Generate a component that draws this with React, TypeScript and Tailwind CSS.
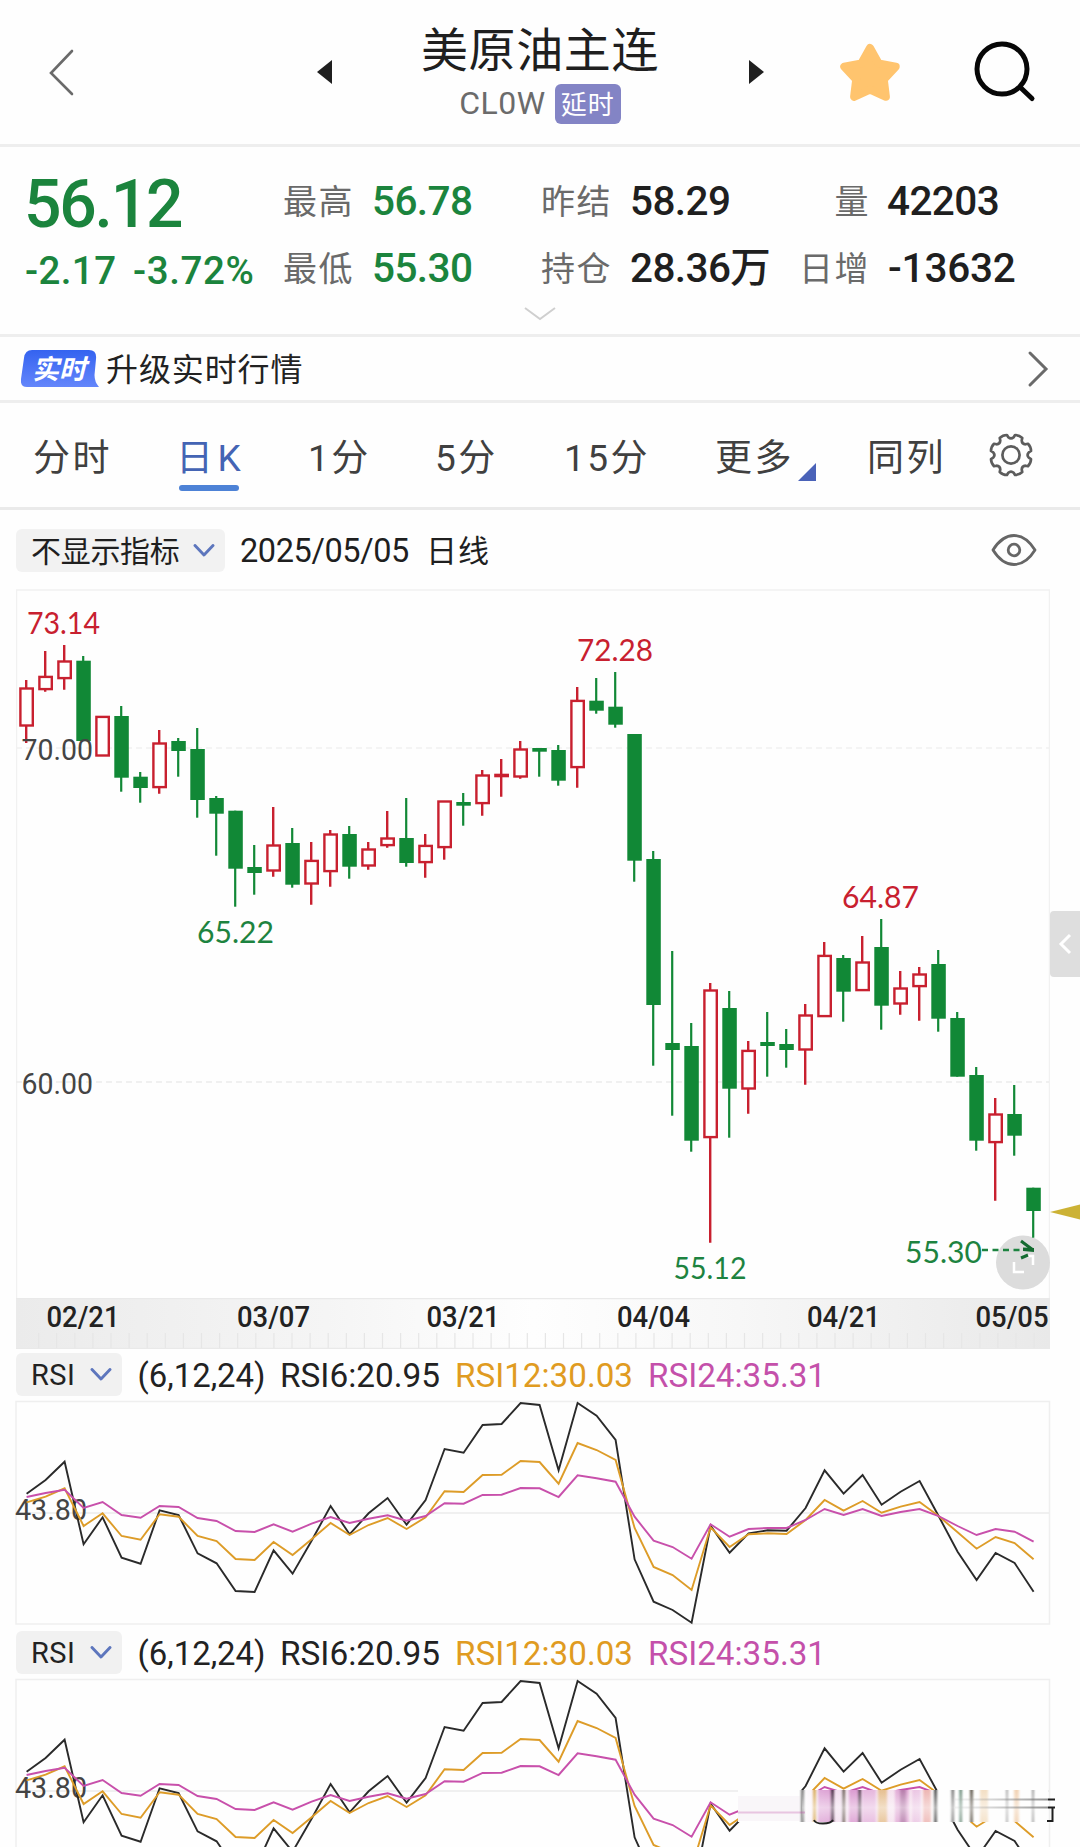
import React from "react";

const SANS = "font-['Roboto','Noto_Sans_CJK_SC',sans-serif]";
const FONT = "Roboto, 'Noto Sans CJK SC', sans-serif";
const LABEL_FONT = "Lato, 'Open Sans', sans-serif";
const RED = "#c8202f";
const GREEN = "#118836";
const STEP = 19;
const FIRST_X = 26.2;

// [direction, high, low, bodyTop, bodyBottom]
type Candle = ["r" | "g", number, number, number, number];

const candles: Candle[] = [
  ["r", 680, 743, 688.3, 725.7],
  ["r", 651, 691.7, 676.7, 689.3],
  ["r", 645, 689.7, 661.3, 678.3],
  ["g", 656, 741, 660.7, 741],
  ["r", 716.7, 755.7, 716.7, 755.7],
  ["g", 706, 791.7, 716, 777.7],
  ["g", 772, 802.7, 776.7, 788],
  ["r", 730, 793.7, 743.3, 787.3],
  ["g", 738, 776.7, 741, 751],
  ["g", 728, 817.7, 749, 800],
  ["g", 796, 855.7, 798, 813.7],
  ["g", 810.7, 906.7, 810.7, 868.7],
  ["g", 845, 894.7, 867, 873],
  ["r", 807, 876.7, 845.3, 870.7],
  ["g", 828, 887.7, 843, 884.7],
  ["r", 842, 904.7, 860.7, 883.7],
  ["r", 830, 886.7, 834.3, 871.3],
  ["g", 826, 878.7, 834, 866.7],
  ["r", 842, 869.7, 849.3, 865.7],
  ["r", 811, 847.7, 838.3, 845.3],
  ["g", 798, 866.7, 838, 863],
  ["r", 834, 877.7, 845.7, 862.3],
  ["r", 801.3, 859.7, 801.3, 847.3],
  ["g", 793, 825.7, 802, 805.7],
  ["r", 770, 815.7, 775.3, 803.3],
  ["r", 759, 796.7, 774.7, 776.3],
  ["r", 741, 778.7, 749.3, 776.7],
  ["g", 748, 776.7, 748, 751.7],
  ["g", 745, 785.7, 750, 780.7],
  ["r", 687, 787.7, 700.7, 767.3],
  ["g", 678, 713.7, 700.7, 710.7],
  ["g", 672, 727.7, 706.7, 724.7],
  ["g", 734, 881.7, 734, 860.7],
  ["g", 851, 1065.7, 859, 1005],
  ["g", 951, 1115.7, 1043, 1050],
  ["g", 1023, 1151.7, 1046, 1140.7],
  ["r", 983, 1242.7, 990.3, 1137.3],
  ["g", 991, 1137.7, 1008, 1088.7],
  ["r", 1041, 1113.7, 1050.7, 1088.7],
  ["g", 1012, 1076.7, 1042, 1046],
  ["g", 1029, 1067.7, 1044, 1050],
  ["r", 1004, 1084.7, 1015.3, 1049.7],
  ["r", 942, 1016.7, 955.7, 1016.3],
  ["g", 955, 1021.7, 958, 991.7],
  ["r", 936, 990.7, 962.3, 990.3],
  ["g", 919, 1029.7, 947, 1005.7],
  ["r", 971, 1014.7, 988.3, 1003.7],
  ["r", 967, 1020.7, 974.3, 986.3],
  ["g", 950, 1031.7, 964, 1018.7],
  ["g", 1012, 1076.7, 1018, 1076.7],
  ["g", 1067, 1150.7, 1075, 1140.7],
  ["r", 1098, 1200.7, 1114.3, 1142.3],
  ["g", 1085, 1155.7, 1114, 1135.7],
  ["g", 1187.7, 1237.7, 1187.7, 1223 - 12],
];

// RSI samples in thirds of a pixel below the header of their panel
const rsi6 = [641, 600, 545, 793, 712, 833, 851, 691, 705, 820, 850, 933, 936, 811, 881, 782, 678, 763, 700, 654, 734, 660, 507, 518, 435, 432, 369, 375, 571, 369, 407, 480, 838, 965, 990, 1028, 737, 818, 760, 751, 752, 684, 571, 641, 585, 674, 635, 603, 708, 815, 900, 819, 849, 935];
const rsi12 = [667, 650, 625, 738, 700, 768, 779, 703, 710, 768, 783, 837, 840, 786, 825, 778, 729, 765, 735, 714, 747, 712, 634, 636, 585, 584, 543, 546, 611, 489, 510, 540, 744, 861, 885, 930, 742, 801, 763, 760, 762, 720, 660, 692, 663, 698, 680, 666, 708, 757, 806, 771, 789, 838];
const rsi24 = [651, 639, 629, 684, 666, 705, 713, 678, 681, 714, 723, 753, 756, 733, 755, 731, 711, 729, 716, 706, 722, 708, 670, 671, 645, 644, 624, 625, 651, 586, 595, 605, 710, 782, 801, 836, 733, 770, 747, 744, 744, 720, 687, 705, 687, 708, 696, 687, 708, 738, 765, 747, 755, 785];

const toPoints = (values: number[]) =>
  values.map((v, i) => `${(FIRST_X + 0.4 + i * STEP).toFixed(1)},${(1280 + v / 3).toFixed(1)}`).join(" ");

type FitProps = { x: number; y: number; w: number; size: number; fill: string; children: string; family?: string; weight?: number };
function Fit({ x, y, w, size, fill, children, family = FONT, weight = 400 }: FitProps) {
  return (
    <text x={x} y={y} fontSize={size} fill={fill} fontFamily={family} fontWeight={weight} textLength={w} lengthAdjust="spacingAndGlyphs">
      {children}
    </text>
  );
}

function starPath() {
  const pts: string[] = [];
  for (let i = 0; i < 10; i++) {
    const r = i % 2 ? 14.5 : 27;
    const a = (Math.PI / 5) * i - Math.PI / 2;
    pts.push(`${(32 + r * Math.cos(a)).toFixed(1)},${(34 + r * Math.sin(a)).toFixed(1)}`);
  }
  return pts.join(" ");
}

function gearPath() {
  const p = (r: number, deg: number) => {
    const a = (deg * Math.PI) / 180;
    return `${(23 + r * Math.cos(a)).toFixed(2)} ${(23 + r * Math.sin(a)).toFixed(2)}`;
  };
  let d = "";
  for (let k = 0; k < 8; k++) {
    const a = 22.5 + 45 * k;
    d += `${k ? "L" : "M"}${p(20.4, a - 11)} Q${p(21.6, a)} ${p(20.4, a + 11)} L${p(18, a + 14)} Q${p(15.4, a + 22.5)} ${p(18, a + 31)} `;
  }
  return d + "Z";
}

function Header() {
  return (
    <header className="flex h-[147px] items-start border-b-[3px] border-[#eeeeee]">
      <svg className="ml-[46px] mt-[46px]" width="32" height="52" fill="none" stroke="#6a6a6a" strokeWidth="2.6" strokeLinecap="round">
        <path d="M26 6 5 28 26 49" transform="translate(0 -1)" />
      </svg>
      <svg className="ml-[239px] mt-[60px]" width="15" height="24" fill="#1f1f1f">
        <path d="M15 0V24L0 12Z" />
      </svg>
      <div className="ml-[68px] flex w-[280px] flex-col items-center pt-[23px]">
        <h1 className="whitespace-nowrap text-[47px] leading-[56px] tracking-[0.6px] text-[#1f1f1f]">美原油主连</h1>
        <div className="mt-[5px] flex items-center">
          <span className="relative -top-px text-[32px] leading-[38px] tracking-[0.5px] text-[#6b6b6b]">CL0W</span>
          <span className="ml-[9px] flex h-[40px] w-[66px] items-center justify-center rounded-[6px] bg-[#8384c5] pt-[2px] text-[26px] leading-none tracking-[1px] text-white">延时</span>
        </div>
      </div>
      <svg className="ml-[69px] mt-[60px]" width="15" height="24" fill="#1f1f1f">
        <path d="M0 0V24L15 12Z" />
      </svg>
      <svg className="ml-[74px] mt-[41px]" width="64" height="68">
        <polygon points={starPath()} fill="#ffc46e" stroke="#ffc46e" strokeWidth="8" strokeLinejoin="round" />
      </svg>
      <svg className="ml-[70px] mt-[38px]" width="66" height="68" fill="none" stroke="#070707" strokeWidth="5" strokeLinecap="round">
        <circle cx="30" cy="31" r="25" />
        <path d="m49 50 11 10.500" />
      </svg>
    </header>
  );
}

function Label({ children, right }: { children: string; right?: boolean }) {
  return (
    <span className={`pl-px text-[34px] leading-[69px] tracking-[1.5px] text-[#6a6a6a] ${right ? "pr-[18px] text-right" : ""}`}>{children}</span>
  );
}

function Value({ children, green }: { children: React.ReactNode; green?: boolean }) {
  return (
    <span className={`-ml-px whitespace-nowrap text-[40.500px] font-medium leading-[66px] tracking-[-0.6px] ${green ? "text-[#1b843d]" : "text-[#1f1f1f]"}`}>
      {children}
    </span>
  );
}

function Quote() {
  return (
    <section className="h-[190px] border-b-[3px] border-[#eeeeee] pt-[21px]">
      <div className="grid h-[134px] grid-cols-[258px_91px_167px_91px_166px_91px_1fr] grid-rows-[67px_67px] pl-[24px]">
        <span className="text-[66px] font-medium leading-[74px] tracking-[-2.2px] text-[#1b843d]">56.12</span>
        <Label>最高</Label>
        <Value green>56.78</Value>
        <Label>昨结</Label>
        <Value>58.29</Value>
        <Label right>量</Label>
        <Value>42203</Value>
        <span className="flex whitespace-nowrap text-[38.500px] font-medium leading-[71px] text-[#1b843d]">
          <span className="ml-px w-[108px] tracking-[0.4px]">-2.17</span>
          <span className="tracking-[0.6px]">-3.72%</span>
        </span>
        <Label>最低</Label>
        <Value green>55.30</Value>
        <Label>持仓</Label>
        <Value>28.36万</Value>
        <Label right>日增</Label>
        <span className="whitespace-nowrap text-[40.500px] font-medium leading-[66px] tracking-[-0.2px] text-[#1f1f1f]">-13632</span>
      </div>
      <svg className="mx-auto mt-[4px]" width="32" height="16" fill="none" stroke="#cfcfcf" strokeWidth="2">
        <path d="M1 2 16 13 31 2" />
      </svg>
    </section>
  );
}

function Upgrade() {
  return (
    <section className="flex h-[66px] items-center border-b-[3px] border-[#eeeeee] pl-[21px] pr-[31px]">
      <div className="relative flex h-[37px] w-[78px] items-center justify-center">
        <svg className="absolute inset-0" width="78" height="37">
          <defs>
            <linearGradient id="live" x1="0" y1="0" x2="0" y2="1">
              <stop offset="0" stopColor="#3463f0" />
              <stop offset="1" stopColor="#6486fb" />
            </linearGradient>
          </defs>
          <path d="M11 0H68Q76 0 75 9L73.500 25Q73.500 32 78 37H6Q-1 37 0 29L3 8Q4 0 11 0Z" fill="url(#live)" />
        </svg>
        <span className="relative -left-[1px] top-px text-[27px] font-bold italic leading-[30px] text-white">实时</span>
      </div>
      <span className="relative top-px ml-[7px] text-[32px] leading-[40px] tracking-[0.9px] text-[#222222]">升级实时行情</span>
      <svg className="ml-auto" width="22" height="38" fill="none" stroke="#6a6a6a" strokeWidth="3" strokeLinecap="round">
        <path d="M3 3 19 19 3 35" />
      </svg>
    </section>
  );
}

function Tabs() {
  const cell = "whitespace-nowrap text-[37px] leading-[44px] tracking-[2.4px] text-[#404040]";
  return (
    <nav className="flex h-[107px] items-start border-b-[3px] border-[#eaeaea] pl-[33px] pt-[34px]">
      <span className={`${cell} w-[144px]`}>分时</span>
      <span className="flex w-[131px] flex-col">
        <span className="-ml-px whitespace-nowrap text-[37px] leading-[44px] tracking-[4.500px] text-[#4464b4]">日K</span>
        <span className="ml-[2px] mt-[4px] h-[6px] w-[60px] rounded-full bg-[#4d82d6]" />
      </span>
      <span className={`${cell} w-[127px]`}>1分</span>
      <span className={`${cell} w-[129px]`}>5分</span>
      <span className={`${cell} w-[151px]`}>15分</span>
      <span className={`${cell} w-[83px]`}>更多</span>
      <svg className="mt-[26px]" width="18" height="18">
        <path d="M18 0V18H0Z" fill="#4a62b8" />
      </svg>
      <span className={`${cell} ml-[51px] w-[121px]`}>同列</span>
      <svg className="-mt-[5px]" width="46" height="46" fill="none" stroke="#5c5c5c" strokeWidth="2.7" strokeLinejoin="round">
        <path d={gearPath()} />
        <circle cx="23" cy="23" r="8.600" />
      </svg>
    </nav>
  );
}

function Chevron() {
  return (
    <svg width="22" height="14" fill="none" stroke="#5d76bd" strokeWidth="2.9" strokeLinecap="round" strokeLinejoin="round">
      <path d="M2 1.500 11 11 20 1.500" />
    </svg>
  );
}

function ChartToolbar() {
  return (
    <div className="flex h-[79px] items-start pl-4 pt-[19px] text-[#1f1f1f]">
      <div className="flex h-[43px] w-[209px] items-center justify-between rounded-[6px] bg-[#f2f2f2] pl-[15px] pr-[10px]">
        <span className="relative top-px text-[30px] leading-[43px] tracking-[-0.3px]">不显示指标</span>
        <Chevron />
      </div>
      <span className="ml-[15px] w-[186px] whitespace-nowrap text-[32.500px] leading-[45px] tracking-[-0.4px]">2025/05/05</span>
      <span className="whitespace-nowrap text-[31px] leading-[45px] tracking-[1px]">日线</span>
      <svg className="ml-auto mr-[43px] mt-[4px]" width="46" height="34" fill="none" stroke="#666666" strokeWidth="2.8">
        <path d="M2 17Q11 2.500 23 2.500T44 17Q35 31.500 23 31.500T2 17Z" strokeLinejoin="round" />
        <circle cx="23" cy="17" r="5.800" />
      </svg>
    </div>
  );
}

function CandleChart() {
  return (
    <div className="flex pl-4">
      <svg width="1034" height="709" viewBox="16 589 1034 709">
        <path d="M16.500 1298V590H1049.500V1298" fill="none" stroke="#f1f1f1" strokeWidth="1.500" />
        <path d="M16 748H1049" stroke="#f1f1f1" strokeWidth="1.300" strokeDasharray="6 4" />
        <path d="M16 1082H1049" stroke="#ebebeb" strokeWidth="1.300" strokeDasharray="6 4" />
        <circle cx="1023" cy="1262.500" r="27" fill="#dcdcdc" />
        <path d="M1014 1262V1272H1024M1023 1256H1033V1265" fill="none" stroke="#fff" strokeWidth="2.500" />
        {candles.map(([dir, high, low, top, bottom], i) => {
          const x = FIRST_X + i * STEP;
          if (dir === "g") {
            return (
              <g key={i} fill={GREEN}>
                <rect x={x - 1.1} y={high} width={2.2} height={low - high} />
                <rect x={x - 6.9} y={top} width={14.5} height={bottom - top} />
              </g>
            );
          }
          return (
            <g key={i}>
              <path d={`M${x} ${high}V${top}M${x} ${bottom}V${low}`} stroke={RED} strokeWidth={2.4} />
              <rect x={x - 5.8} y={top + 0.2} width={12.4} height={Math.max(bottom - top - 0.4, 0.5)} fill="#fff" stroke={RED} strokeWidth={2.4} />
            </g>
          );
        })}
        <Fit x={27} y={633.5} w={73} size={31} fill={RED} family={LABEL_FONT}>73.14</Fit>
        <Fit x={577} y={660.5} w={76} size={31} fill={RED} family={LABEL_FONT}>72.28</Fit>
        <Fit x={197} y={942.5} w={77} size={31} fill="#1d8340" family={LABEL_FONT}>65.22</Fit>
        <Fit x={842} y={907.5} w={77} size={31} fill={RED} family={LABEL_FONT}>64.87</Fit>
        <Fit x={673.5} y={1278.5} w={73} size={31} fill="#1d8340" family={LABEL_FONT}>55.12</Fit>
        <Fit x={905} y={1262.5} w={77} size={31} fill="#1d8340" family={LABEL_FONT}>55.30</Fit>
        <path d="M982 1250H1022" stroke="#1d8340" strokeWidth="2.600" strokeDasharray="6 4.500" />
        <path d="M1021 1241 1033 1250M1021 1258 1028 1255" stroke="#146b30" strokeWidth="3" fill="none" />
        <path d="M1023 1247.500 1034 1248V1252L1023 1251Z" fill="#146b30" />
        <Fit x={21.5} y={759.5} w={71.5} size={29} fill="#444444">70.00</Fit>
        <Fit x={21.5} y={1093.5} w={71.5} size={29} fill="#444444">60.00</Fit>
      </svg>
      <div className="flex w-[30px] flex-col">
        <div className="mt-[322px] flex h-[66px] items-center justify-center rounded-l-[4px] bg-[#dedede]">
          <svg width="14" height="24" fill="none" stroke="#fff" strokeWidth="3">
            <path d="M12 3 3 12 12 21" />
          </svg>
        </div>
        <svg className="mt-[227px]" width="30" height="16">
          <path d="M0 8 30 .500V15.500Z" fill="#ccb235" />
        </svg>
      </div>
    </div>
  );
}

function DateAxis() {
  const ticks = Array.from({ length: 56 }, (_, i) => 38 + i * 18.1);
  const dates: [string, number][] = [["02/21", 46.5], ["03/07", 237], ["03/21", 426.5], ["04/04", 617], ["04/21", 807], ["05/05", 975.5]];
  return (
    <svg className="ml-4 block" width="1036" height="51" viewBox="16 1298 1036 51">
      <defs>
        <linearGradient id="axis">
          <stop offset="0" stopColor="#ebebeb" />
          <stop offset=".3" stopColor="#f5f5f5" />
          <stop offset=".5" stopColor="#fefefe" />
          <stop offset=".7" stopColor="#f7f7f7" />
          <stop offset="1" stopColor="#e9e9e9" />
        </linearGradient>
      </defs>
      <rect x="16" y="1298" width="1034" height="51" fill="url(#axis)" />
      <path d="M16 1298.500H1050M16 1348.300H1050" stroke="#e9e9e9" strokeWidth="1.300" />
      {ticks.filter((t) => t < 1046).map((t) => (
        <rect key={t} x={t} y="1333" width="1.200" height="15" fill="#e6e6e6" />
      ))}
      {dates.map(([text, x]) => (
        <Fit key={text} x={x} y={1327} w={73} size={29} weight={500} fill="#222222">{text}</Fit>
      ))}
    </svg>
  );
}

function Artifact() {
  // x, width, colour, opacity of each vertical streak
  const streaks: [number, number, string, number][] = [
    [801, 3, "#222", 0.6], [813, 3, "#d09a30", 0.8], [818, 14, "#c45ab4", 0.45], [831, 3, "#35152f", 0.9],
    [842.5, 2.5, "#3a3020", 0.8], [849, 12, "#c45ab4", 0.5], [858.5, 2.5, "#222", 0.8], [862, 14, "#d078c4", 0.4],
    [878, 9, "#dba545", 0.55], [895, 14, "#c45ab4", 0.4], [900, 6, "#7a3c70", 0.4], [912, 9, "#d078c4", 0.3],
    [923, 8, "#dd6a60", 0.45], [934, 3, "#222", 0.8], [951.5, 2.5, "#222", 0.65], [959.5, 2.5, "#1d5030", 0.7],
    [970, 3, "#3a3020", 0.8], [980, 8, "#e0a85a", 0.35], [1006, 2, "#555", 0.5], [1014, 5, "#e0954a", 0.4],
    [1032, 2, "#555", 0.6],
  ];
  return (
    <g transform="translate(0 -278)">
      <rect x="738" y="1790" width="310" height="32" fill="#fefefe" />
      <rect x="802" y="1790" width="134" height="32" fill="url(#haze)" />
      {streaks.map(([x, w, c, o]) => (
        <rect key={x} x={x} y="1790" width={w} height="32" fill={c} opacity={o} filter="url(#soft)" />
      ))}
      <rect x="802" y="1790" width="246" height="32" fill="url(#fade)" />
      <path d="M738 1812.500H805" stroke="#c04ca8" strokeWidth="1.800" opacity=".35" />
      <rect x="738" y="1796" width="62" height="25" fill="#eadbe6" opacity=".22" />
      <path d="M955 1799.500H1048M955 1807.500H1048" stroke="url(#trail)" strokeWidth="2" />
      <path d="M814 1820Q815 1823.500 823 1823.500T833 1820" fill="none" stroke="#222" strokeWidth="1.800" />
      <path d="M1048 1799.500H1055M1048 1807.500H1055M1052.500 1807V1821H1047" fill="none" stroke="#1f1f1f" strokeWidth="2" />
    </g>
  );
}

function RsiPanel({ last }: { last?: boolean }) {
  return (
    <section className={last ? "h-[221px] overflow-hidden" : "h-[278px] overflow-hidden"}>
      <div className="flex h-[51px] items-start whitespace-nowrap pl-4 pt-[4px]">
        <div className="flex h-[43px] w-[106px] items-center justify-between rounded-[6px] bg-[#f1f1f1] pl-[15px] pr-[10px]">
          <span className="relative top-px text-[29px] leading-[43px] tracking-[0.4px] text-[#222222]">RSI</span>
          <Chevron />
        </div>
        <svg width="710" height="43" viewBox="122 1353 710 43" overflow="visible">
          <Fit x={137.5} y={1386.5} w={128} size={33} fill="#222222">(6,12,24)</Fit>
          <Fit x={280} y={1386.5} w={160} size={33} fill="#222222">RSI6:20.95</Fit>
          <Fit x={455} y={1386.5} w={178} size={33} fill="#e09b21">RSI12:30.03</Fit>
          <Fit x={648} y={1386.5} w={178} size={33} fill="#c450aa">RSI24:35.31</Fit>
        </svg>
      </div>
      <svg className="ml-[14px] block" width="1052" height="227" viewBox="14 1400 1052 227">
        <defs>
          <filter id="soft" x="-1" y="-.2" width="3" height="1.400"><feGaussianBlur stdDeviation="1.3 0" /></filter>
          <linearGradient id="haze">
            <stop offset="0" stopColor="#fff" />
            <stop offset=".2" stopColor="#f3dff0" />
            <stop offset=".8" stopColor="#f6e3ee" />
            <stop offset="1" stopColor="#fff" />
          </linearGradient>
          <linearGradient id="fade" x1="0" y1="0" x2="0" y2="1">
            <stop offset="0" stopColor="#fff" stopOpacity="0" />
            <stop offset=".55" stopColor="#fff" stopOpacity=".5" />
            <stop offset="1" stopColor="#fff" stopOpacity=".15" />
          </linearGradient>
          <linearGradient id="trail" gradientUnits="userSpaceOnUse" x1="955" y1="0" x2="1048" y2="0">
            <stop offset="0" stopColor="#999" stopOpacity=".1" />
            <stop offset="1" stopColor="#666" stopOpacity=".7" />
          </linearGradient>
        </defs>
        <rect x="16" y="1401.500" width="1033.500" height="222.500" fill="none" stroke="#efefef" strokeWidth="1.500" />
        <path d="M16 1513H1049" stroke="#ebebeb" strokeWidth="1.500" />
        <Fit x={15} y={1519.5} w={72} size={30} fill="#444444">43.80</Fit>
        <g fill="none" strokeWidth="1.900" strokeLinejoin="miter">
          <polyline points={toPoints(rsi6)} stroke="#2a2a2a" />
          <polyline points={toPoints(rsi12)} stroke="#dd9c28" />
          <polyline points={toPoints(rsi24)} stroke="#c850ab" />
        </g>
        {last && <Artifact />}
      </svg>
    </section>
  );
}

export default function App() {
  return (
    <main lang="zh-CN" className={`h-[1847px] w-[1080px] overflow-hidden bg-[#fefefe] ${SANS}`}>
      <Header />
      <Quote />
      <Upgrade />
      <Tabs />
      <ChartToolbar />
      <CandleChart />
      <DateAxis />
      <RsiPanel />
      <RsiPanel last />
    </main>
  );
}
